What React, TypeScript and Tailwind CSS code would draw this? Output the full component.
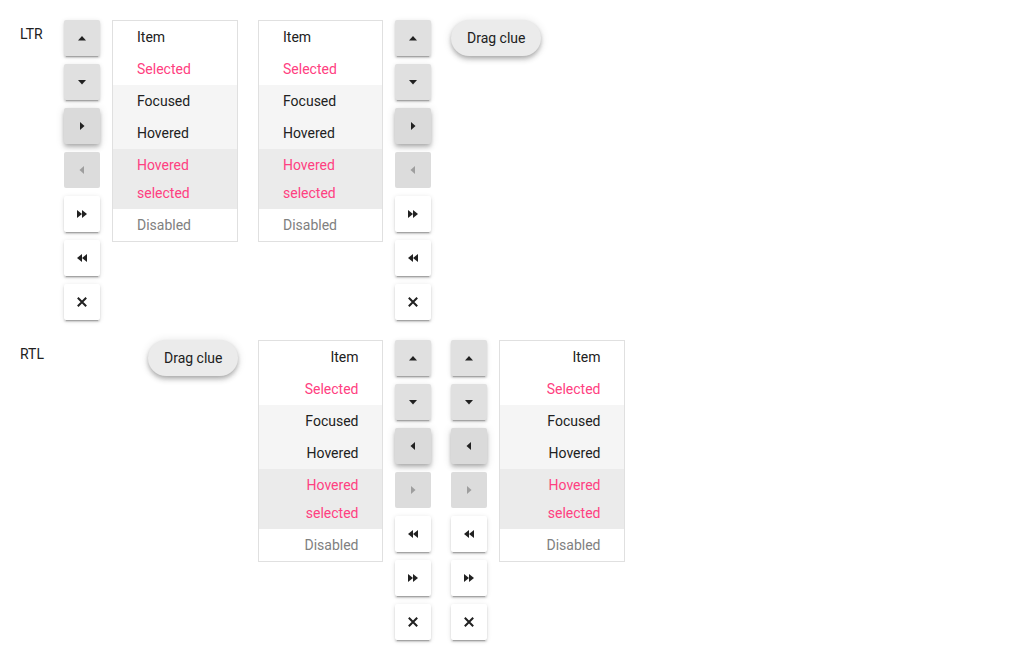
import React from "react";

type Icon = "up" | "down" | "right" | "left" | "ffwd" | "rew" | "x";
type Tone = "normal" | "focus" | "disabled" | "white";

function Glyph({ name }: { name: Icon }) {
  const fill = "currentColor";
  return (
    <svg width="16" height="16" viewBox="0 0 16 16">
      {name === "up" && <polygon points="4,10.5 8,6 12,10.5" fill={fill} />}
      {name === "down" && <polygon points="4,6 12,6 8,10.5" fill={fill} />}
      {name === "right" && <polygon points="6,4 10.5,8 6,12" fill={fill} />}
      {name === "left" && <polygon points="10,4 5.5,8 10,12" fill={fill} />}
      {name === "ffwd" && (
        <>
          <polygon points="3,4 8,8 3,12" fill={fill} />
          <polygon points="8,4 13,8 8,12" fill={fill} />
        </>
      )}
      {name === "rew" && (
        <>
          <polygon points="8,4 3,8 8,12" fill={fill} />
          <polygon points="13,4 8,8 13,12" fill={fill} />
        </>
      )}
      {name === "x" && (
        <path d="M3.8 3.8 L12.2 12.2 M12.2 3.8 L3.8 12.2" stroke={fill} strokeWidth="2" fill="none" />
      )}
    </svg>
  );
}

const toneClass: Record<Tone, string> = {
  normal: "bg-[#e0e0e0] text-[#212121] shadow-[0_3px_1px_-2px_rgba(0,0,0,0.2),0_2px_2px_0_rgba(0,0,0,0.14),0_1px_5px_0_rgba(0,0,0,0.12)]",
  focus: "bg-[#dadada] text-[#212121] shadow-[0_2px_4px_-1px_rgba(0,0,0,0.2),0_4px_5px_0_rgba(0,0,0,0.14),0_1px_10px_0_rgba(0,0,0,0.12)]",
  disabled: "bg-[#dcdcdc] text-[#9e9e9e]",
  white: "bg-white text-[#212121] shadow-[0_3px_1px_-2px_rgba(0,0,0,0.2),0_2px_2px_0_rgba(0,0,0,0.14),0_1px_5px_0_rgba(0,0,0,0.12)]",
};

function ToolButton({ icon, tone }: { icon: Icon; tone: Tone }) {
  return (
    <div className={`w-9 h-9 rounded-[2px] flex items-center justify-center ${toneClass[tone]}`}>
      <Glyph name={icon} />
    </div>
  );
}

function Toolbar({ rtl }: { rtl?: boolean }) {
  const buttons: [Icon, Tone][] = rtl
    ? [["up", "normal"], ["down", "normal"], ["left", "focus"], ["right", "disabled"], ["rew", "white"], ["ffwd", "white"], ["x", "white"]]
    : [["up", "normal"], ["down", "normal"], ["right", "focus"], ["left", "disabled"], ["ffwd", "white"], ["rew", "white"], ["x", "white"]];
  return (
    <div className="flex flex-col gap-2 shrink-0">
      {buttons.map(([icon, tone], i) => (
        <ToolButton key={i} icon={icon} tone={tone} />
      ))}
    </div>
  );
}

function ListBox({ rtl, width }: { rtl?: boolean; width: string }) {
  const align = rtl ? "text-right" : "text-left";
  const item = `px-6 py-[2px] leading-7 ${align}`;
  return (
    <div className={`${width} shrink-0 border border-[#e0e0e0] bg-white text-sm`}>
      <div className={`${item} text-[#212121]`}>Item</div>
      <div className={`${item} text-[#ff4081]`}>Selected</div>
      <div className={`${item} text-[#212121] bg-[#f5f5f5]`}>Focused</div>
      <div className={`${item} text-[#212121] bg-[#f5f5f5]`}>Hovered</div>
      <div className={`${item} text-[#ff4081] bg-[#ebebeb]`}>Hovered selected</div>
      <div className={`${item} text-[#808080]`}>Disabled</div>
    </div>
  );
}

function DragClue() {
  return (
    <div className="h-9 px-4 rounded-full bg-[#ebebeb] text-[#212121] text-sm flex items-center shrink-0 shadow-[0_2px_4px_-1px_rgba(0,0,0,0.2),0_4px_5px_0_rgba(0,0,0,0.14),0_1px_10px_0_rgba(0,0,0,0.12)]">
      Drag clue
    </div>
  );
}

export default function App() {
  return (
    <div className="w-[1024px] h-[660px] bg-white p-5 flex flex-col gap-5 text-[#212121]" style={{ fontFamily: "Roboto, 'Noto Sans', sans-serif" }}>
      <div className="flex items-start">
        <div className="w-[44px] text-sm leading-7">LTR</div>
        <div className="flex items-start gap-5">
          <div className="flex items-start gap-3">
            <Toolbar />
            <ListBox width="w-[126px]" />
          </div>
          <div className="flex items-start gap-3">
            <ListBox width="w-[125px]" />
            <Toolbar />
          </div>
          <DragClue />
        </div>
      </div>

      <div className="flex items-start">
        <div className="w-[44px] text-sm leading-7">RTL</div>
        <div className="flex items-start gap-5 ml-[84px]">
          <DragClue />
          <div className="flex items-start gap-3">
            <ListBox rtl width="w-[125px]" />
            <Toolbar rtl />
          </div>
          <div className="flex items-start gap-3">
            <Toolbar rtl />
            <ListBox rtl width="w-[126px]" />
          </div>
        </div>
      </div>
    </div>
  );
}
